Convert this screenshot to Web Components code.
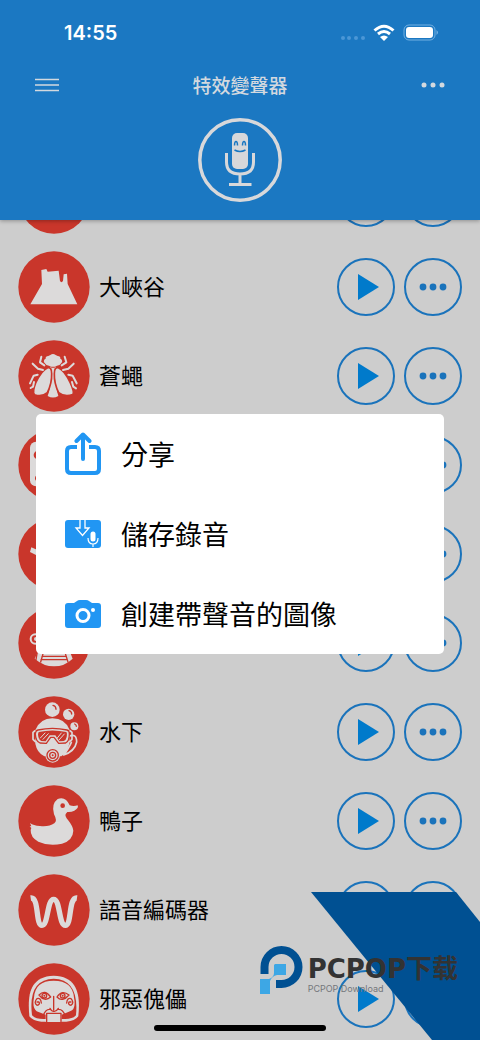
<!DOCTYPE html>
<html lang="zh-Hant">
<head>
<meta charset="utf-8">
<meta name="viewport" content="width=device-width, initial-scale=1">
<title>特效變聲器</title>
<style>
body {
  margin: 0;
  background-color: #cdcdcd;
  font-family: "Noto Sans CJK TC", "Noto Sans", sans-serif;
}
</style>
</head>
<body>
<voice-app></voice-app>

<script>
"use strict"

// Drawings for the round effect badges, on a 216 x 216 grid
const effectIcons = {
  blank: `<path class="line" d="M97 176q10 8 22 0"/>`,
  canyon: `<path d="M37 160 72 99 70 57 85 54 89 62 122 59 126 90Q130 97 135 90L137 70 147 68 149 99 178 160Z"/>`,
  fly: `
    <path d="M78 67Q76 59 83 56Q82 48 91 48L97 45Q105 39 113 45L119 48Q128 48 127 56Q134 59 132 67Q127 76 117 77Q105 84 93 77Q83 76 78 67Z"/>
    <path d="M96 80Q105 87 114 80L113 130Q115 150 121 168Q105 177 89 168Q97 148 98 120Z"/>
    <path class="out" d="M89 83Q101 80 101 101Q102 129 88 158Q71 172 50 164Q42 158 53 129Q70 91 89 83Z"/>
    <path class="out" d="M121 83Q109 80 109 101Q108 129 122 158Q139 172 164 164Q170 158 157 129Q140 91 121 83Z"/>
    <path class="limb" d="M70 50 66 67 79 76M75 90 60 86 44 71M59 104 47 107 36 130M48 126 45 140 38 144M140 50 145 67 131 76M135 90 151 86 167 71M151 104 164 107 176 130M162 126 166 140 174 145"/>`,
  phone: `<rect x="36" y="38" width="140" height="134" rx="18"/><circle class="cut" cx="60" cy="78" r="13"/><circle class="cut" cx="60" cy="148" r="9"/>`,
  plane: `<path d="M40 88 36 102 60 114 150 112 150 94 60 97Z"/>`,
  robot: `
    <circle class="limb" cx="52" cy="96" r="14"/><circle cx="54" cy="96" r="6"/>
    <path d="M62 60H154V130L164 155Q140 178 108 178Q77 178 50 155L62 130Z"/>
    <path class="line" d="M62 110 54 158M76 136H140M72 148H145M69 158H148M78 130 68 165M139 130 150 165"/>`,
  scuba: `
    <circle cx="103" cy="41" r="22"/><path class="line" d="M105 28q9 2 9 12"/>
    <circle cx="152" cy="55" r="17"/><path class="line" d="M153 44q8 2 8 10"/>
    <circle cx="169" cy="91" r="12"/><path class="line" d="M170 84q5 2 5 7"/>
    <path class="limb thin" d="M151 122Q176 109 176 138Q170 166 137 177Q154 154 160 139"/>
    <path d="M52 102Q67 67 103 67Q141 67 155 102L154 143Q148 169 130 181H79Q57 170 52 143Z"/>
    <path class="line" d="M60 102Q103 92 147 102Q155 104 154 114Q154 136 143 141L122 142 108 124H98L85 142 66 141Q53 136 52 114Q52 104 60 102Z"/>
    <path class="cut" d="M62 108Q103 99 145 108Q148 111 146 123Q144 133 137 135L124 136 112 118H95L83 136 70 135Q60 130 60 114Z"/>
    <path class="limb hair" d="M67 126 81 111M75 130 91 113M117 127 130 111M124 131 139 114"/>
    <path class="limb thin" d="M50 105 45 109V130L52 137M157 105 162 109V130L155 137"/>
    <circle cx="104" cy="178" r="22"/><circle class="line" cx="104" cy="178" r="17"/><circle class="line" cx="104" cy="178" r="9"/><circle class="cut" cx="104" cy="178" r="3"/>`,
  duck: `<path d="M36 114Q46 122 66 123Q93 126 109 115Q119 108 108 88Q99 57 119 42Q143 33 155 61Q167 65 179 61Q183 70 169 77Q160 82 148 81L143 87Q140 93 150 105Q165 124 166 137Q165 166 132 176Q94 185 61 170Q37 157 38 135L40 129 35 124 40 124Z"/><circle class="cut" cx="134" cy="62" r="7"/>`,
  wave: `<path class="thick" d="M38 72C64 68 52 154 72 154C91 154 87 76 107 76C127 76 122 154 142 154C162 154 151 68 177 72"/>`,
  puppet: `
    <path d="M34 160C29 101 31 41 107 38C182 40 187 101 181 160Q171 175 145 176H70Q45 175 34 160Z"/>
    <path class="cut" d="M42 157Q29 49 107 47Q184 49 174 157Q167 167 141 168H76Q51 168 42 157Z"/>
    <path d="M48 104Q51 53 107 53Q164 53 168 104Q175 139 156 145L131 155V177H83V155L56 145Q42 133 48 104Z"/>
    <path class="line" d="M63 96Q81 78 98 102Q80 118 63 96ZM117 102Q132 79 153 96Q133 119 117 102Z"/>
    <circle class="line" cx="79" cy="98" r="7"/><circle class="line" cx="134" cy="98" r="7"/>
    <circle class="cut" cx="79" cy="98" r="3"/><circle class="cut" cx="134" cy="98" r="3"/>
    <path class="line" d="M107 100V141M96 136Q102 147 107 145Q114 147 121 136M96 139Q82 138 76 158M121 139Q135 138 141 158M86 151H129M86 151V176M129 151V176M70 120Q68 103 57 107Q46 119 57 127Q67 125 63 117L57 117M146 120Q148 103 159 107Q170 119 159 127Q149 125 153 117L159 117"/>`
};

class StatusBar extends HTMLElement {
  constructor() {
    super();
    this.attachShadow({ mode: 'open' }).innerHTML = `
    <style>
    :host {
      display: flex;
      align-items: center;
      justify-content: space-between;
      box-sizing: border-box;
      height: 52px;
      padding: 14px 42px 0 64px;
      color: #fff;
      font: 600 20px/24px Inter, sans-serif;
    }
    svg {
      display: block;
    }
    </style>
    <time>14:55</time>
    <svg width="98" height="18" viewBox="0 0 98 18" aria-hidden="true">
      <g fill="#4b97d6"><circle cx="3" cy="14" r="2"/><circle cx="9" cy="14" r="2"/><circle cx="16" cy="14" r="2"/><circle cx="23" cy="14" r="2"/></g>
      <g fill="none" stroke="#fff" stroke-width="3"><path d="M34.500 6.500Q44 -2 53.500 6.500"/><path d="M38 10Q44 5 50 10"/></g>
      <path fill="#fff" d="M40 13Q44 10 48 13L44 17Z"/>
      <rect x="64" y="1" width="31" height="15" rx="5" fill="none" stroke="#73b0e2"/>
      <rect x="66" y="3" width="27" height="11" rx="3" fill="#fff"/>
      <path fill="#73b0e2" d="M96.500 6q3 2.500 0 5z"/>
    </svg>
    `;
  }
}

class AppHeader extends HTMLElement {
  constructor() {
    super();
    this.attachShadow({ mode: 'open' }).innerHTML = `
    <style>
    :host {
      display: block;
      position: relative;
      z-index: 1;
      padding-bottom: 18px;
      background-color: #1b78c2;
      box-shadow: 0 1px 4px #00000050;
      color: #d3d9df;
    }
    .toolbar {
      display: flex;
      align-items: center;
      justify-content: space-between;
      height: 66px;
      padding: 0 34px;
    }
    h1 {
      margin: 0;
      font-size: 19px;
      font-weight: 500;
      line-height: 28px;
    }
    button {
      display: block;
      padding: 0;
      border: 0;
      background: none;
      color: inherit;
    }
    .mic {
      margin: 0 auto;
    }
    svg {
      display: block;
    }
    </style>
    <status-bar></status-bar>
    <div class="toolbar">
      <button aria-label="選單"><svg width="26" height="16" viewBox="0 0 26 16" fill="none" stroke="currentColor" stroke-width="1.500"><path d="M1 2.500h24M1 8h24M1 13.500h24"/></svg></button>
      <h1><slot></slot></h1>
      <button aria-label="更多"><svg width="26" height="16" viewBox="0 0 26 16" fill="currentColor"><circle cx="4" cy="8" r="2.500"/><circle cx="13" cy="8" r="2.500"/><circle cx="22" cy="8" r="2.500"/></svg></button>
    </div>
    <button class="mic" aria-label="錄音">
      <svg width="84" height="84" viewBox="0 0 84 84" fill="none" stroke="#d8d8da">
        <circle cx="42" cy="42" r="40.200" stroke-width="3.500"/>
        <rect x="34" y="15" width="16" height="36" rx="5" fill="#d8d8da" stroke="none"/>
        <path stroke-width="3" d="M28.500 35v9q0 12 13.500 12t13.500-12v-9M42 56v10M31 66.500h22.500"/>
        <path stroke="#1b78c2" stroke-width="1.500" d="M36.500 27.500q0-4 1.500-4t1.500 4M44.500 27.500q0-4 1.500-4t1.500 4M36.500 32q5.500 3 11 0"/>
      </svg>
    </button>
    `;
  }
}

class EffectRow extends HTMLElement {
  constructor() {
    super();
    this.attachShadow({ mode: 'open' });
  }
  connectedCallback() {
    this.shadowRoot.innerHTML = `
    <style>
    :host {
      display: flex;
      align-items: center;
      box-sizing: border-box;
      height: 89px;
      padding: 0 18px;
      color: #000;
    }
    svg {
      display: block;
      flex: none;
    }
    .badge {
      fill: #dcdada;
      stroke-linecap: round;
      stroke-linejoin: round;
    }
    .disc, .cut { fill: #c9362b; }
    .line { fill: none; stroke: #c9362b; stroke-width: 4; }
    .out { stroke: #c9362b; stroke-width: 5; }
    .limb { fill: none; stroke: #dcdada; stroke-width: 6; }
    .thin { stroke-width: 5; }
    .hair { stroke-width: 3; }
    .thick { fill: none; stroke: #dcdada; stroke-width: 16; stroke-linecap: butt; }
    .name {
      flex: 1;
      margin-left: 9px;
      padding-bottom: 4px;
      font-size: 22px;
      line-height: 32px;
    }
    button {
      width: 58px;
      height: 58px;
      margin-left: 9px;
      padding: 0;
      border: 2px solid #1a73bb;
      border-radius: 50%;
      background: none;
      color: #1a73bb;
    }
    </style>
    <svg class="badge" width="72" height="72" viewBox="0 0 216 216" aria-hidden="true">
      <circle class="disc" cx="108" cy="108" r="107"/>
      ${effectIcons[this.getAttribute('icon')]}
    </svg>
    <span class="name"><slot></slot></span>
    <button aria-label="播放"><svg width="54" height="54" viewBox="0 0 54 54"><path fill="#007acb" d="M19 14 40 27 19 40Z"/></svg></button>
    <button aria-label="更多"><svg width="54" height="54" viewBox="0 0 54 54" fill="currentColor"><circle cx="17" cy="27" r="3.400"/><circle cx="27" cy="27" r="3.400"/><circle cx="37" cy="27" r="3.400"/></svg></button>
    `;
  }
}

class EffectList extends HTMLElement {
  constructor() {
    super();
    // the list is scrolled, so its first row is partly under the header
    this.attachShadow({ mode: 'open' }).innerHTML = `
    <style>
    :host {
      display: block;
      flex: 1;
      min-height: 0;
      margin-top: -67px;
      overflow: hidden;
    }
    </style>
    <slot></slot>
    `;
  }
}

class MenuItem extends HTMLElement {
  constructor() {
    super();
    this.attachShadow({ mode: 'open' }).innerHTML = `
    <style>
    :host {
      display: block;
    }
    button {
      display: flex;
      align-items: center;
      gap: 20px;
      width: 100%;
      height: 80px;
      padding: 0 28px;
      border: 0;
      background: none;
      color: #000;
      font: inherit;
      font-size: 27px;
      line-height: 40px;
      text-align: left;
    }
    </style>
    <button><slot name="icon"></slot><span><slot></slot></span></button>
    `;
  }
}

class ActionDialog extends HTMLElement {
  constructor() {
    super();
    this.attachShadow({ mode: 'open' }).innerHTML = `
    <style>
    :host {
      display: flex;
      align-items: center;
      position: absolute;
      inset: 0;
      z-index: 2;
      padding: 28px 36px 0;
    }
    .card {
      flex: 1;
      border-radius: 5px;
      background-color: #fff;
    }
    </style>
    <div class="card" role="dialog"><slot></slot></div>
    `;
  }
}

class SiteMark extends HTMLElement {
  constructor() {
    super();
    this.attachShadow({ mode: 'open' }).innerHTML = `
    <style>
    :host {
      display: flex;
      align-items: flex-start;
      gap: 5px;
      position: absolute;
      right: 0;
      bottom: 0;
      z-index: 3;
      box-sizing: border-box;
      height: 148px;
      padding: 53px 22px 0 0;
    }
    .band {
      position: absolute;
      right: 0;
      bottom: 0;
    }
    .logo, .words {
      position: relative;
    }
    .words {
      display: flex;
      flex-direction: column;
      padding-top: 10px;
      white-space: nowrap;
    }
    .brand {
      color: #333;
      font: bold 26px/28px "DejaVu Sans", "Noto Sans CJK SC", sans-serif;
    }
    .sub {
      color: #74777b;
      font: 9px/12px Inter, sans-serif;
    }
    </style>
    <svg class="band" width="169" height="148" viewBox="0 0 169 148" aria-hidden="true"><path fill="#005092" d="M0 0H145L169 30V148H121Z"/></svg>
    <svg class="logo" width="43" height="50" viewBox="0 0 43 50" aria-hidden="true">
      <path fill="none" stroke="#005092" stroke-width="8" d="M4.500 29V22A17 17 0 1 1 21.500 39H16"/>
      <path fill="#3da7e5" d="M15 19H26V30H17Q12 31 10 36V49H0V34H9Q14 32 14 28V20Z"/>
    </svg>
    <div class="words">
      <span class="brand" lang="zh-Hans">PCPOP下载</span>
      <span class="sub">PCPOP Download</span>
    </div>
    `;
  }
}

class VoiceApp extends HTMLElement {
  constructor() {
    super();
    this.attachShadow({ mode: 'open' }).innerHTML = `
    <style>
    :host {
      display: flex;
      flex-direction: column;
      position: relative;
      height: 100vh;
      overflow: hidden;
    }
    .home {
      position: absolute;
      bottom: 9px;
      left: 32%;
      right: 32%;
      z-index: 4;
      height: 6px;
      border-radius: 3px;
      background-color: #000;
    }
    </style>
    <app-header>特效變聲器</app-header>
    <effect-list>
      <effect-row icon="blank"></effect-row>
      <effect-row icon="canyon">大峽谷</effect-row>
      <effect-row icon="fly">蒼蠅</effect-row>
      <effect-row icon="phone"></effect-row>
      <effect-row icon="plane"></effect-row>
      <effect-row icon="robot"></effect-row>
      <effect-row icon="scuba">水下</effect-row>
      <effect-row icon="duck">鴨子</effect-row>
      <effect-row icon="wave">語音編碼器</effect-row>
      <effect-row icon="puppet">邪惡傀儡</effect-row>
    </effect-list>
    <action-dialog>
      <menu-item>
        <svg slot="icon" width="37" height="44" viewBox="0 0 37 44" fill="none" stroke="#2196f3" stroke-width="4" stroke-linecap="round" stroke-linejoin="round" aria-hidden="true"><path stroke-linecap="butt" d="M13 15H7Q3 15 3 19V37Q3 41 7 41H31Q35 41 35 37V19Q35 15 31 15H25"/><path d="M19 27V3M12.500 9 19 2.500 25.500 9"/></svg>
        分享
      </menu-item>
      <menu-item>
        <svg slot="icon" width="37" height="30" viewBox="0 0 37 30" aria-hidden="true">
          <rect x="1" y="1" width="36" height="28" rx="3" fill="#2196f3"/>
          <path fill="none" stroke="#fff" stroke-width="1.300" d="M16 0V9H12L18.500 16.500 25 9H21V0"/>
          <rect x="26.500" y="12.500" width="5" height="10" rx="2.500" fill="#fff"/>
          <path fill="none" stroke="#fff" stroke-width="1.200" d="M24 19q0 6 5 6t5-6M29 25v3"/>
        </svg>
        儲存錄音
      </menu-item>
      <menu-item>
        <svg slot="icon" width="37" height="30" viewBox="0 0 37 30" aria-hidden="true">
          <path fill="#2196f3" d="M4 4H10L13 2Q14 1 16 1H22Q24 1 25 2L28 4H34Q37 4 37 7V26Q37 29 34 29H4Q1 29 1 26V7Q1 4 4 4Z"/>
          <circle cx="19" cy="16.500" r="6" fill="none" stroke="#fff" stroke-width="3"/>
          <circle cx="29" cy="11" r="2" fill="#fff"/>
        </svg>
        創建帶聲音的圖像
      </menu-item>
    </action-dialog>
    <site-mark></site-mark>
    <div class="home"></div>
    `;
  }
}

customElements.define('status-bar', StatusBar);
customElements.define('app-header', AppHeader);
customElements.define('effect-row', EffectRow);
customElements.define('effect-list', EffectList);
customElements.define('menu-item', MenuItem);
customElements.define('action-dialog', ActionDialog);
customElements.define('site-mark', SiteMark);
customElements.define('voice-app', VoiceApp);
</script>
</body>
</html>
